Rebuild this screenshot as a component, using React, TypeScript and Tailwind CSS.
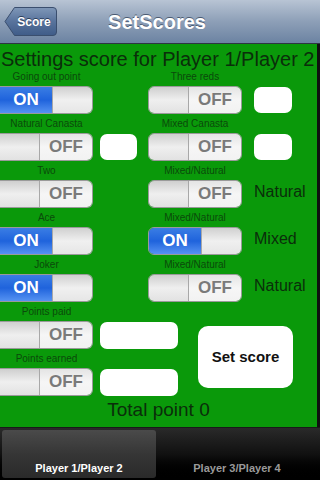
import React from 'react';

const font = { fontFamily: '"Liberation Sans", Arial, sans-serif' };

function Switch({ on, wide = 94, edge = false }: { on: boolean; wide?: number; edge?: boolean }) {
  const w = wide === 93 ? 'w-[93px]' : 'w-[94px]';
  return (
    <div
      className={`${w} h-[28px] flex overflow-hidden border border-[#9a9a9a] ${edge ? 'rounded-r-[6px] border-l-0' : 'rounded-[6px]'}`}
    >
      {on ? (
        <>
          <div className="flex-1 flex items-center justify-center bg-gradient-to-b from-[#3a7de4] via-[#1f63dc] to-[#5592f2] text-white font-bold text-[17px]">
            ON
          </div>
          <div className="w-[40px] border-l border-[#a8a8a8] bg-gradient-to-b from-[#d0d0d0] via-[#f0f0f0] to-[#e6e6e6]" />
        </>
      ) : (
        <>
          <div className="w-[40px] border-r border-[#a8a8a8] bg-gradient-to-b from-[#cfcfcf] via-[#efefef] to-[#e2e2e2]" />
          <div className="flex-1 flex items-center justify-center bg-gradient-to-b from-[#e4e4e4] via-[#f6f6f6] to-[#f2f2f2] text-[#7a7a7a] font-bold text-[17px]">
            OFF
          </div>
        </>
      )}
    </div>
  );
}

function Label({ text, w }: { text: string; w: string }) {
  return (
    <div className={`${w} h-[19px] flex items-center justify-center text-[10px] text-[#0b4a0b] leading-none`}>{text}</div>
  );
}

type Row = {
  left: string;
  leftOn: boolean;
  leftField?: boolean;
  right: string;
  rightOn: boolean;
  rightField?: boolean;
  rightText?: string;
};

const rows: Row[] = [
  { left: 'Going out point', leftOn: true, right: 'Three reds', rightOn: false, rightField: true },
  { left: 'Natural Canasta', leftOn: false, leftField: true, right: 'Mixed Canasta', rightOn: false, rightField: true },
  { left: 'Two', leftOn: false, right: 'Mixed/Natural', rightOn: false, rightText: 'Natural' },
  { left: 'Ace', leftOn: true, right: 'Mixed/Natural', rightOn: true, rightText: 'Mixed' },
  { left: 'Joker', leftOn: true, right: 'Mixed/Natural', rightOn: false, rightText: 'Natural' },
];

export default function App() {
  return (
    <div className="w-[320px] h-[480px] flex flex-col bg-black overflow-hidden" style={font}>
      {/* Nav bar */}
      <div className="h-[44px] flex items-center relative border-b border-[#2d3642] bg-gradient-to-b from-[#b8c4d4] via-[#8d9fb7] to-[#6c83a2]">
        <div className="relative ml-[4px] w-[54px] h-[31px] flex items-center justify-center pl-[6px]">
          <svg className="absolute inset-0" width="54" height="31" viewBox="0 0 54 31">
            <defs>
              <linearGradient id="bb" x1="0" y1="0" x2="0" y2="1">
                <stop offset="0" stopColor="#7f97b8" />
                <stop offset="0.5" stopColor="#58739c" />
                <stop offset="1" stopColor="#3f5c88" />
              </linearGradient>
            </defs>
            <path d="M10.5 1.5 H49 Q52.5 1.5 52.5 5 V26 Q52.5 29.5 49 29.5 H10.5 L1 15.5 Z" fill="url(#bb)" stroke="#3a4e6e" strokeWidth="1" />
          </svg>
          <span className="relative text-white font-bold text-[12px] [text-shadow:0_-1px_0_#2c3e5c]">Score</span>
        </div>
        <div className="flex-1 flex justify-center pr-[64px]">
          <span className="text-white font-bold text-[20px] [text-shadow:0_-1px_0_#4a5a72]">SetScores</span>
        </div>
      </div>

      {/* Content */}
      <div className="h-[383px] flex">
        <div className="w-[317px] bg-[#0a990a] flex flex-col">
          <div className="h-[23px] pt-[5px] pl-[1px] text-[20px] leading-[20px] text-[#0a2e0a] whitespace-nowrap">
            Settings score for Player 1/Player 2
          </div>

          {rows.map((r, i) => (
            <div key={i} className="h-[47px] flex">
              <div className="w-[148px] flex flex-col">
                <Label text={r.left} w="w-[93px]" />
                <div className="flex items-center">
                  <Switch on={r.leftOn} wide={93} edge />
                  {r.leftField && <div className="ml-[7px] w-[37px] h-[26px] bg-white rounded-[7px]" />}
                </div>
              </div>
              <div className="flex flex-col">
                <Label text={r.right} w="w-[94px]" />
                <div className="flex items-center">
                  <Switch on={r.rightOn} />
                  {r.rightField && <div className="ml-[12px] w-[38px] h-[26px] bg-white rounded-[7px]" />}
                  {r.rightText && <span className="ml-[12px] -mt-[4px] text-[16px] text-[#0a2e0a]">{r.rightText}</span>}
                </div>
              </div>
            </div>
          ))}

          <div className="flex">
            <div className="w-[198px] flex flex-col">
              {['Points paid', 'Points earned'].map((t) => (
                <div key={t} className="h-[47px] flex flex-col">
                  <Label text={t} w="w-[93px]" />
                  <div className="flex items-center">
                    <Switch on={false} wide={93} edge />
                    <div className="ml-[7px] w-[78px] h-[27px] bg-white rounded-[7px]" />
                  </div>
                </div>
              ))}
            </div>
            <div className="pt-[24px]">
              <div className="w-[95px] h-[62px] bg-white rounded-[10px] flex items-center justify-center text-[15px] font-bold text-[#111]">
                Set score
              </div>
            </div>
          </div>

          <div className="flex-1 flex items-center justify-center text-[19px] text-[#0a2e0a] pb-[2px]">Total point 0</div>
        </div>
        <div className="flex-1 bg-[#101010]" />
      </div>

      {/* Tab bar */}
      <div className="flex-1 flex border-t border-[#1a1a1a] bg-gradient-to-b from-[#2a2a2a] via-[#111] to-[#000] px-[2px] pt-[2px] pb-[2px]">
        <div className="w-[154px] rounded-[3px] bg-gradient-to-b from-[#4a4a4a] via-[#363636] to-[#2a2a2a] flex items-end justify-center pb-[2px]">
          <span className="text-white font-bold text-[11px]">Player 1/Player 2</span>
        </div>
        <div className="flex-1 flex items-end justify-center pb-[2px]">
          <span className="text-[#9a9a9a] font-bold text-[11px]">Player 3/Player 4</span>
        </div>
      </div>
    </div>
  );
}
